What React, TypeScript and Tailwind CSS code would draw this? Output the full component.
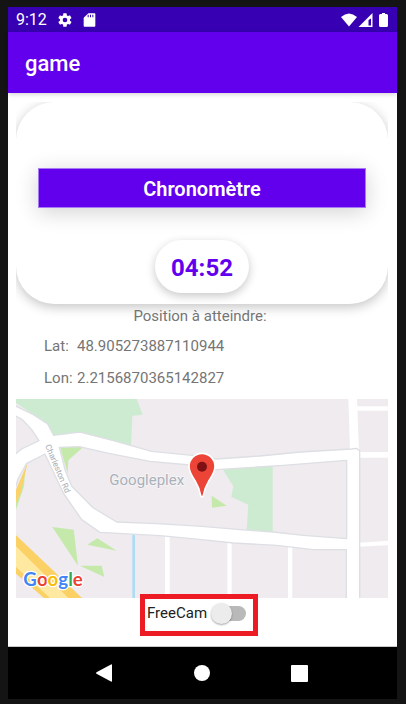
import React from "react";

function StatusBar() {
  return (
    <div className="flex h-[25px] items-center bg-[#3700b3] pl-2 pr-[9px] text-white">
      <span className="w-[41px] text-base leading-6">9:12</span>
      <svg className="h-4 w-4" viewBox="0 0 24 24" fill="white" aria-label="Settings">
        <path d="M19.4 13a7.5 7.5 0 0 0 0-2l2.1-1.6a.5.5 0 0 0 .1-.6l-2-3.5a.5.5 0 0 0-.6-.2l-2.500 1a7.300 7.300 0 0 0-1.700-1L14.400 2.400a.5.5 0 0 0-.5-.4h-4a.5.5 0 0 0-.5.4L9 5.100a7.700 7.700 0 0 0-1.700 1l-2.500-1a.5.5 0 0 0-.6.2l-2 3.500a.5.5 0 0 0 .1.6L4.500 11a8 8 0 0 0 0 2l-2.200 1.600a.5.5 0 0 0-.1.6l2 3.500c.1.2.4.3.6.2l2.500-1c.5.4 1.100.7 1.700 1l.4 2.700c0 .2.2.4.5.4h4c.2 0 .5-.2.5-.4l.4-2.700a7.300 7.300 0 0 0 1.700-1l2.500 1c.2.1.5 0 .6-.2l2-3.500a.5.5 0 0 0-.1-.6zM12 15.500a3.500 3.500 0 1 1 0-7 3.500 3.500 0 0 1 0 7z" />
      </svg>
      <svg className="ml-2 h-4 w-4" viewBox="0 0 24 24" fill="white" aria-label="SD card">
        <path fillRule="evenodd" d="M20 2h-9L4 8.500v12c0 1 .8 1.500 1.500 1.500H20c.8 0 1.500-.5 1.500-1.500V3.500C21.500 2.500 20.800 2 20 2zM11.500 8H10V4h1.500zm3.500 0H13.500V4H15zm3.500 0H17V4h1.500z" />
      </svg>
      <div className="ml-auto flex items-center">
        <svg className="h-4 w-4" viewBox="0 0 16 16" fill="white" aria-label="Wi-Fi">
          <path d="M0 5Q8-2 16 5L8 14.500z" />
        </svg>
        <svg className="ml-px h-4 w-[15px]" viewBox="0 0 15 16" fill="white" aria-label="Signal">
          <path fillRule="evenodd" d="M14.500 1v14H.5zM13 6.500L10.500 8v5.500H13z" />
        </svg>
        <svg className="ml-[6px] h-4 w-[9px]" viewBox="0 0 9 16" fill="white" aria-label="Battery">
          <path d="M3 1h3v1h1.500Q9 2 9 3.500v10Q9 15 7.500 15h-6Q0 15 0 13.500v-10Q0 2 1.500 2H3z" />
        </svg>
      </div>
    </div>
  );
}

function LocationMap() {
  return (
    <svg className="mt-[5px] block w-full bg-[#efebef]" viewBox="48 28 1116 597" role="img" aria-label="Map">
      <path fill="#cdebd0" d="M48 28H410L428 75L397 78L393 170L240 140L161 145L143 103L48 40z" />
      <path fill="#cdebd0" d="M669 240L818 225V430L740 425L745 345L694 322L700 290z" />
      <g fill="#c5e9aa">
        <path d="M635 318L680 348L636 354z" />
        <path d="M178 165L250 172L205 212L203 250z" />
        <path d="M157 412L221 420L234 528z" />
        <path d="M262 465L292 446L350 483z" />
        <path d="M240 528H305L313 562z" />
        <path d="M48 360L72 290L75 245L48 310z" />
      </g>
      <path fill="#fbd268" d="M48 300L83 218L62 310L48 340z" />
      <path fill="#fbd065" d="M48 437L246 625H132L48 552z" />
      <path fill="#ffe9a1" d="M48 470L205 625H150L48 532z" />
      <g fill="white">
        <path d="M1045 28h26l6 155h-27z" />
        <path d="M1068 50h96v13h-96zM1075 187h89v17h-89zM1075 459l89-6v14l-89 4z" />
        <path d="M495 438h14v187h-14zM682 455h13v170h-13zM864 470h13v155h-13z" />
      </g>
      <path fill="#aedcf3" d="M397 433h8v192h-8z" />
      <path
        fill="white"
        stroke="#dddfe4"
        strokeWidth="4"
        strokeLinejoin="round"
        fillRule="evenodd"
        d="M44 48L100 75L143 103L161 137L240 127L340 153L455 185L606 200L649 208L780 199L900 187L1055 178L1070 176L1079 184V630H1039V480H940L830 467L700 460L606 450L480 438L300 428L245 390L190 310L150 225L135 193L80 221L55 265L44 300V195L65 178L117 153L95 120L65 88L44 78zM178 173L238 171L330 192L450 215L570 226L649 240L850 227L1040 212V447L910 437L820 427L720 420L606 410L470 402L350 397L280 355L215 290L195 240z"
      />
      <text x="328" y="287" fontSize="45" fill="#a9b0b9" stroke="#f8f7f9" strokeWidth="4" paintOrder="stroke">
        Googleplex
      </text>
      <text transform="translate(135 168) rotate(67)" fontSize="25" fill="#a6abb0">
        Charleston Rd
      </text>
      <path fill="#ec4538" stroke="white" strokeWidth="5" d="M606 191a39 39 0 0 1 39 39c0 18-9 29-18 43-9 15-14 28-17 45q-4 9-8 0c-3-17-8-30-17-45-9-14-18-25-18-43a39 39 0 0 1 39-39z" />
      <circle cx="606" cy="231" r="15" fill="#7f1013" />
      <text x="70" y="588" fontSize="56" stroke="white" strokeWidth="8" paintOrder="stroke" strokeLinejoin="round" className="font-['Lato',sans-serif] font-bold">
        <tspan fill="#4285f4">G</tspan>
        <tspan fill="#ea4335">o</tspan>
        <tspan fill="#fbbc05">o</tspan>
        <tspan fill="#4285f4">g</tspan>
        <tspan fill="#34a853">l</tspan>
        <tspan fill="#ea4335">e</tspan>
      </text>
    </svg>
  );
}

function Coordinate({ label, value }: { label: string; value: string }) {
  return (
    <div className="flex h-8 items-center pl-7">
      <dt className="w-[33px]">{label}</dt>
      <dd>{value}</dd>
    </div>
  );
}

function NavigationBar() {
  return (
    <nav className="flex h-[52px] justify-center bg-black pr-0.5">
      <button className="flex w-[98px] items-center justify-center" aria-label="Back">
        <svg className="h-[18px] w-[18px]" viewBox="0 0 18 18" fill="white">
          <path d="M16 .500Q17 0 17 1V17Q17 18 16 17.500L1.500 9.800Q.500 9 1.500 8.200z" />
        </svg>
      </button>
      <button className="flex w-[98px] items-center justify-center" aria-label="Home">
        <span className="h-4 w-4 rounded-full bg-white" />
      </button>
      <button className="flex w-[98px] items-center justify-center" aria-label="Overview">
        <span className="h-[17px] w-[17px] rounded-[1px] bg-white" />
      </button>
    </nav>
  );
}

export default function App() {
  return (
    <div className="flex min-h-screen flex-col bg-[#141414] pb-[5px] pl-2 pr-[9px] pt-[7px] font-['Roboto',sans-serif]">
      <StatusBar />
      <header className="z-10 flex h-[61px] items-center bg-[#6200ee] pl-[17px] pt-0.5 shadow-[0_1px_5px_rgba(0,0,0,0.2)]">
        <h1 className="text-[22px] font-medium leading-7 text-white">game</h1>
      </header>
      <main className="flex flex-1 flex-col items-center border-b border-[#c8c8c8] bg-white pl-2 pr-[9px] pt-[9px]">
        <div className="w-full overflow-hidden text-[15px] leading-[22px] text-[#757575]">
          <section className="flex flex-col items-center rounded-[38px] bg-white px-[22px] pb-[11px] pt-[66px] shadow-[0_3px_12px_rgba(0,0,0,0.24)]">
            <h2 className="flex h-10 w-full items-center justify-center border border-[#a67af4] bg-[#6200ee] pt-0.5 text-xl font-semibold text-white shadow-[0_4px_22px_rgba(0,0,0,0.18)]">
              Chronomètre
            </h2>
            <div role="timer" className="mt-8 flex h-[53px] items-center rounded-[27px] bg-white px-4 pt-0.5 text-2xl font-bold text-[#6200ee] shadow-[0_3px_10px_rgba(0,0,0,0.22)]">
              04:52
            </div>
          </section>
          <p className="mb-[3px] mr-1 mt-px text-center">Position à atteindre:</p>
          <dl>
            <Coordinate label="Lat:" value="48.905273887110944" />
            <Coordinate label="Lon:" value="2.2156870365142827" />
          </dl>
          <LocationMap />
        </div>
        <label className="relative -mt-1 mr-1.5 flex h-[42px] w-[118px] items-center border-[5px] border-[#ed1c24] bg-white pb-1 pl-0.5 text-[15px] text-[#212121]">
          FreeCam
          <input
            type="checkbox"
            role="switch"
            className="relative ml-2 h-[15px] w-[31px] appearance-none rounded-full bg-[#b9b9b9] before:absolute before:-left-1 before:-top-[3px] before:h-[21px] before:w-[21px] before:rounded-full before:bg-[#ececec] before:shadow-[0_1px_2px_rgba(0,0,0,0.35)] checked:before:left-3.5"
          />
        </label>
      </main>
      <NavigationBar />
    </div>
  );
}
